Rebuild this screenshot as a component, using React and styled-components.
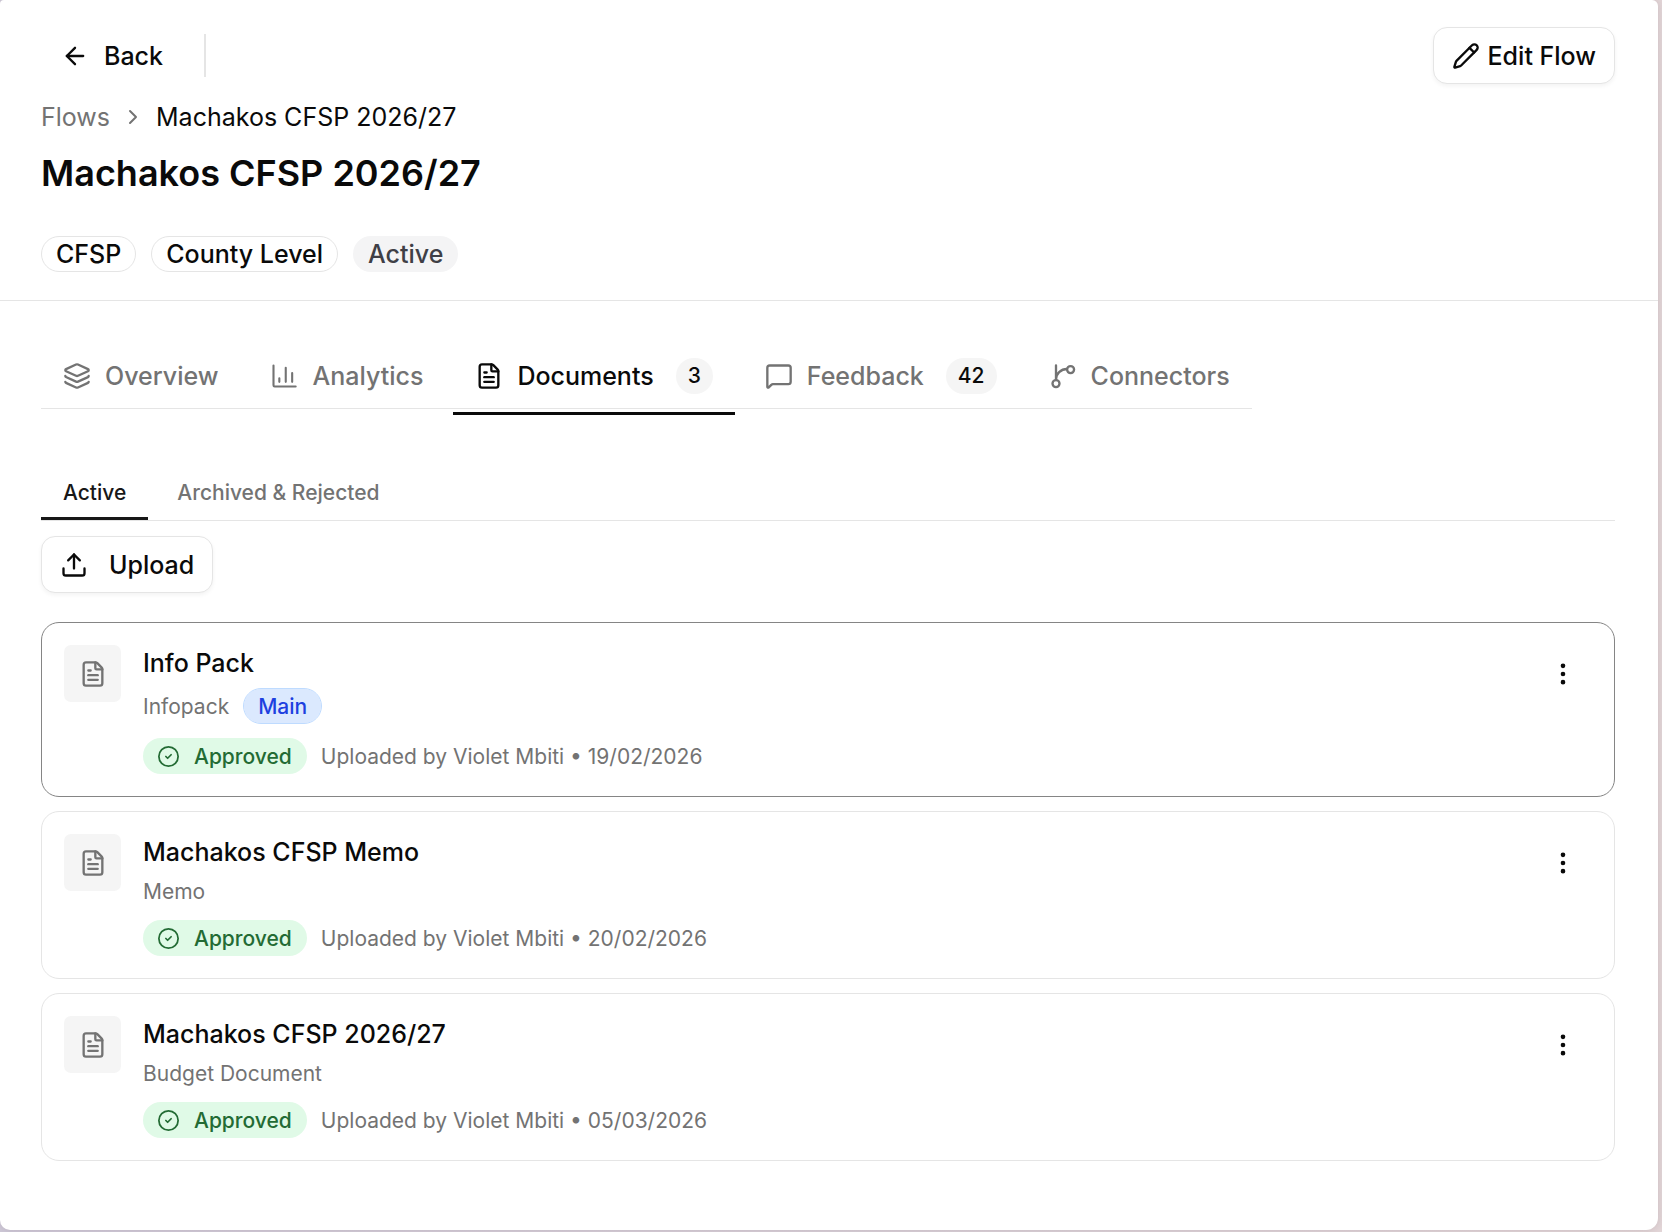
import React, { useState } from "react";
import styled, { createGlobalStyle } from "styled-components";
import {
  ArrowLeft,
  ChevronRight,
  EllipsisVertical,
  FileText,
  Layers,
  MessageSquare,
  Pencil,
  Upload,
} from "lucide-react";

const GlobalStyle = createGlobalStyle`
  * {
    box-sizing: border-box;
  }
  body {
    margin: 0;
    padding: 0 4px 2px 0;
    background: linear-gradient(90deg, #cfc9d8 0%, #e3d6d8 100%);
    color: #0a0a0a;
    font-family: Inter, "Liberation Sans", sans-serif;
    font-size: 25px;
    line-height: 36px;
  }
  button {
    font: inherit;
    color: inherit;
    background: none;
    border: none;
    padding: 0;
    cursor: pointer;
  }
  svg {
    flex-shrink: 0;
  }
`;

const Panel = styled.div`
  min-height: calc(100vh - 2px);
  background: #fff;
  border-radius: 4px 6px 12px 10px;
  box-shadow: 0 0 8px rgba(60, 40, 50, 0.15);
`;

const Header = styled.header`
  padding: 27px 43px 28px 41px;
  border-bottom: 1px solid #e5e5e5;
`;

const TopBar = styled.div`
  display: flex;
  align-items: center;
  height: 57px;
`;

const BackButton = styled.button`
  display: flex;
  align-items: center;
  gap: 15px;
  padding: 0 20px;
  font-weight: 500;
`;

const Divider = styled.span`
  width: 2px;
  height: 43px;
  margin-left: 21px;
  background: #e5e5e5;
`;

const OutlineButton = styled.button`
  display: inline-flex;
  align-items: center;
  gap: ${(props) => props.$gap}px;
  height: 57px;
  padding: 0 18px;
  border: 1px solid #e5e5e5;
  border-radius: 14px;
  background: #fff;
  font-weight: 500;
  box-shadow: 0 2px 4px rgba(0, 0, 0, 0.05);
`;

const Spacer = styled.div`
  flex: 1;
`;

const Breadcrumb = styled.nav`
  display: flex;
  align-items: center;
  gap: 11px;
  margin-top: 15px;
`;

const CrumbLink = styled.a`
  color: #737373;
  text-decoration: none;
`;

const Title = styled.h1`
  margin: 17px 0 41px;
  font-size: 36px;
  line-height: 43px;
  font-weight: 600;
`;

const BadgeRow = styled.div`
  display: flex;
  gap: 15px;
`;

const Badge = styled.span`
  display: inline-flex;
  align-items: center;
  height: 36px;
  padding: 0 14px;
  border: 1px solid ${(props) => props.$border || "transparent"};
  border-radius: 18px;
  background: ${(props) => props.$bg || "transparent"};
  background-clip: ${(props) => (props.$border ? "padding-box" : "border-box")};
  color: ${(props) => props.$color || "#0a0a0a"};
  font-size: ${(props) => (props.$small ? 21 : 25)}px;
  font-weight: 500;
  gap: 15px;
`;

const Content = styled.main`
  padding: 43px 43px 68px 41px;
`;

const Tabs = styled.div`
  display: inline-flex;
  gap: 8px;
  border-bottom: 1px solid #e5e5e5;
`;

const Tab = styled.button`
  position: relative;
  display: flex;
  align-items: center;
  gap: 14px;
  height: 64px;
  padding: 0 22px;
  color: ${(props) => (props.$active ? "#0a0a0a" : "#737373")};
  font-weight: 500;

  &::after {
    content: "";
    position: absolute;
    left: 0;
    right: 0;
    bottom: -7px;
    height: 3px;
    background: ${(props) => (props.$active ? "#0a0a0a" : "transparent")};
  }
`;

const Count = styled.span`
  display: inline-flex;
  align-items: center;
  justify-content: center;
  height: 36px;
  min-width: 36px;
  margin-left: 8px;
  padding: 0 12px;
  border-radius: 18px;
  background: #f5f5f5;
  color: #0a0a0a;
  font-size: 21px;
`;

const SubTabs = styled.div`
  display: flex;
  gap: 7px;
  margin-top: 60px;
  border-bottom: 1px solid #e5e5e5;
`;

const SubTab = styled.button`
  height: 51px;
  padding: 0 22px;
  border-bottom: 3px solid ${(props) => (props.$active ? "#171717" : "transparent")};
  color: ${(props) => (props.$active ? "#171717" : "#737373")};
  font-size: 21px;
  font-weight: 500;
`;

const Toolbar = styled.div`
  margin: 15px 0 29px;
  display: flex;
`;

const DocList = styled.div`
  display: flex;
  flex-direction: column;
  gap: 14px;
`;

const DocCard = styled.article`
  display: flex;
  align-items: flex-start;
  gap: 22px;
  padding: 22px;
  border: 1px solid ${(props) => (props.$main ? "#858585" : "#e5e5e5")};
  border-radius: 18px;
`;

const DocIcon = styled.div`
  display: grid;
  place-items: center;
  width: 57px;
  height: 57px;
  border-radius: 7px;
  background: #f5f5f5;
  color: #737373;
`;

const DocBody = styled.div`
  flex: 1;
  min-width: 0;
`;

const DocTitle = styled.h2`
  margin: 0 0 7px;
  font-size: 25px;
  line-height: 36px;
  font-weight: 500;
`;

const DocLine = styled.div`
  display: flex;
  align-items: center;
  gap: 14px;
  margin-bottom: ${(props) => (props.$last ? 0 : 14)}px;
  color: #737373;
  font-size: 21px;
  line-height: 29px;
`;

const MenuButton = styled.button`
  display: grid;
  place-items: center;
  width: 58px;
  height: 57px;
`;

const ChartIcon = () => (
  <svg width="28" height="28" viewBox="0 0 24 24" fill="none" stroke="currentColor" strokeWidth="1.8" strokeLinecap="round" strokeLinejoin="round">
    <path d="M3 3v17a1 1 0 0 0 1 1h18M19 17V9.5M13.5 17V5M8 17v-3" />
  </svg>
);

const BranchIcon = () => (
  <svg width="28" height="28" viewBox="0 0 24 24" fill="none" stroke="currentColor" strokeWidth="2" strokeLinecap="round" strokeLinejoin="round">
    <path d="M6 3v12M6 15c0-5 4-9 9.5-9" />
    <circle cx="6" cy="18.5" r="3" />
    <circle cx="18.5" cy="6.5" r="3" />
  </svg>
);

const ApprovedIcon = () => (
  <svg width="21" height="21" viewBox="0 0 24 24" fill="none" stroke="currentColor" strokeWidth="2" strokeLinecap="round" strokeLinejoin="round">
    <circle cx="12" cy="12" r="11" />
    <path d="m9 12 2 2 4-4" />
  </svg>
);

const tabs = [
  { id: "overview", label: "Overview", icon: <Layers size={28} strokeWidth={2} /> },
  { id: "analytics", label: "Analytics", icon: <ChartIcon /> },
  { id: "documents", label: "Documents", icon: <FileText size={28} />, count: 3 },
  { id: "feedback", label: "Feedback", icon: <MessageSquare size={28} strokeWidth={2} />, count: 42 },
  { id: "connectors", label: "Connectors", icon: <BranchIcon /> },
];

const documents = [
  { title: "Info Pack", type: "Infopack", main: true, date: "19/02/2026" },
  { title: "Machakos CFSP Memo", type: "Memo", date: "20/02/2026" },
  { title: "Machakos CFSP 2026/27", type: "Budget Document", date: "05/03/2026" },
];

const App = () => {
  const [tab, setTab] = useState("documents");
  const [subTab, setSubTab] = useState("active");

  return (
    <>
      <GlobalStyle />
      <Panel>
        <Header>
          <TopBar>
            <BackButton>
              <ArrowLeft size={28} strokeWidth={2} />
              Back
            </BackButton>
            <Divider />
            <Spacer />
            <OutlineButton $gap={8}>
              <Pencil size={28} />
              Edit Flow
            </OutlineButton>
          </TopBar>
          <Breadcrumb aria-label="Breadcrumb">
            <CrumbLink href="#flows">Flows</CrumbLink>
            <ChevronRight size={24} strokeWidth={2} color="#737373" />
            <span>Machakos CFSP 2026/27</span>
          </Breadcrumb>
          <Title>Machakos CFSP 2026/27</Title>
          <BadgeRow>
            <Badge $border="#e5e5e5">CFSP</Badge>
            <Badge $border="#e5e5e5">County Level</Badge>
            <Badge $bg="#f4f4f5" $color="#3f3f46">Active</Badge>
          </BadgeRow>
        </Header>
        <Content>
          <Tabs role="tablist">
            {tabs.map((item) => (
              <Tab
                key={item.id}
                role="tab"
                aria-selected={tab === item.id}
                $active={tab === item.id}
                onClick={() => setTab(item.id)}
              >
                {item.icon}
                {item.label}
                {item.count && <Count>{item.count}</Count>}
              </Tab>
            ))}
          </Tabs>
          <SubTabs role="tablist">
            <SubTab role="tab" aria-selected={subTab === "active"} $active={subTab === "active"} onClick={() => setSubTab("active")}>
              Active
            </SubTab>
            <SubTab role="tab" aria-selected={subTab === "archived"} $active={subTab === "archived"} onClick={() => setSubTab("archived")}>
              Archived &amp; Rejected
            </SubTab>
          </SubTabs>
          <Toolbar>
            <OutlineButton $gap={21}>
              <Upload size={28} />
              Upload
            </OutlineButton>
          </Toolbar>
          <DocList>
            {documents.map((doc) => (
              <DocCard key={doc.title} $main={doc.main}>
                <DocIcon>
                  <FileText size={28} />
                </DocIcon>
                <DocBody>
                  <DocTitle>{doc.title}</DocTitle>
                  <DocLine>
                    <span>{doc.type}</span>
                    {doc.main && (
                      <Badge $small $bg="#dbe9fe" $border="#bedbff" $color="#1d40e0">
                        Main
                      </Badge>
                    )}
                  </DocLine>
                  <DocLine $last>
                    <Badge $small $bg="#e0fae7" $color="#236b34">
                      <ApprovedIcon />
                      Approved
                    </Badge>
                    <span>Uploaded by Violet Mbiti • {doc.date}</span>
                  </DocLine>
                </DocBody>
                <MenuButton aria-label={`Actions for ${doc.title}`}>
                  <EllipsisVertical size={28} />
                </MenuButton>
              </DocCard>
            ))}
          </DocList>
        </Content>
      </Panel>
    </>
  );
};

export default App;
